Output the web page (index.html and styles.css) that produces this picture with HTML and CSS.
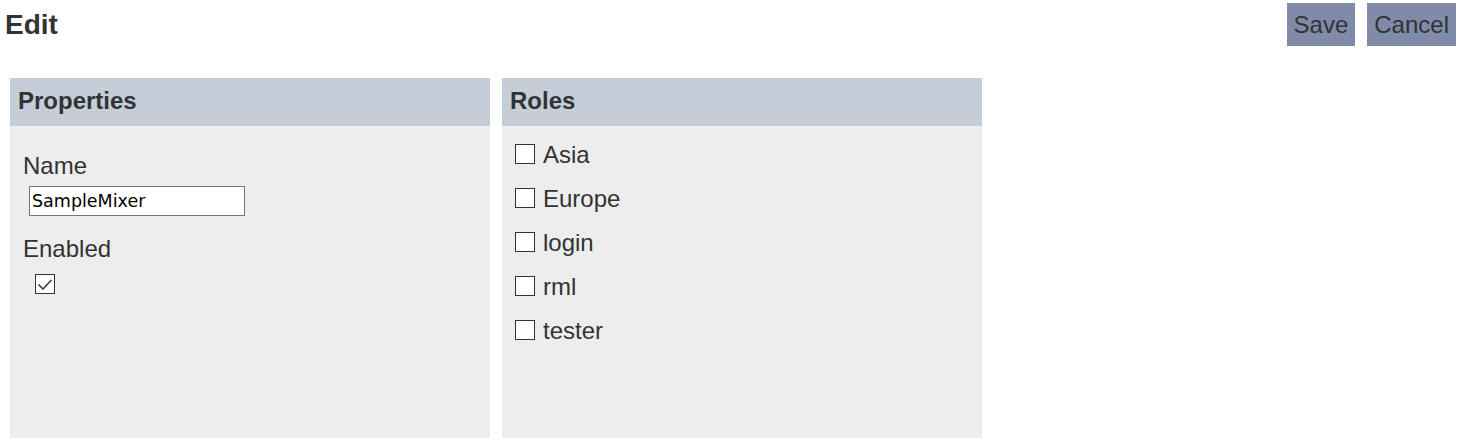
FILE: index.html
```html
<!DOCTYPE html>
<html lang="en">
<head>
    <meta charset="UTF-8" />
    <title>Edit</title>
    <link rel="stylesheet" href="styles.css">
</head>
<body>
    <header class="topbar">
        <h1>Edit</h1>
        <div class="actions">
            <button class="btn">Save</button>
            <button class="btn">Cancel</button>
        </div>
    </header>

    <main class="panels">
        <section class="panel">
            <h2 class="panel-title">Properties</h2>
            <div class="panel-body props">
                <div class="field">
                    <label class="field-label">Name</label>
                    <input class="text-input" type="text" value="SampleMixer" />
                </div>
                <div class="field">
                    <label class="field-label">Enabled</label>
                    <span class="check checked">
                        <svg viewBox="0 0 18 18" width="18" height="18"><path d="M2.5 9.5 L7 14 L15.5 5" fill="none" stroke="#333" stroke-width="1.5"/></svg>
                    </span>
                </div>
            </div>
        </section>

        <section class="panel">
            <h2 class="panel-title">Roles</h2>
            <div class="panel-body roles">
                <label class="role"><span class="check"></span>Asia</label>
                <label class="role"><span class="check"></span>Europe</label>
                <label class="role"><span class="check"></span>login</label>
                <label class="role"><span class="check"></span>rml</label>
                <label class="role"><span class="check"></span>tester</label>
            </div>
        </section>
    </main>
</body>
</html>
```

FILE: styles.css
```css
:root {
    --text: #333333;
    --head-bg: #c5cdd9;
    --panel-bg: #ededed;
    --btn-bg: #7f8ba8;
}
body {
    margin: 0;
    font-family: 'Liberation Sans', Arial, sans-serif;
    color: var(--text);
    background: #ffffff;
}
.topbar {
    display: flex;
    justify-content: space-between;
    align-items: flex-start;
    padding: 3px 6px 0 5px;
    height: 78px;
    box-sizing: border-box;
}
h1 {
    margin: 6px 0 0;
    font-size: 28px;
    line-height: 32px;
}
.actions {
    display: flex;
    gap: 12px;
}
.btn {
    height: 43px;
    padding: 0 7px;
    border: none;
    background: var(--btn-bg);
    color: var(--text);
    font-family: 'Liberation Sans', Arial, sans-serif;
    font-size: 24px;
    cursor: pointer;
}
.panels {
    display: flex;
    gap: 12px;
    padding-left: 10px;
}
.panel {
    width: 480px;
    height: 360px;
    background: var(--panel-bg);
}
.panel-title {
    margin: 0;
    height: 48px;
    line-height: 45px;
    padding-left: 8px;
    background: var(--head-bg);
    font-size: 24px;
}
.props {
    padding: 26px 13px;
}
.field {
    margin-bottom: 19px;
}
.field-label {
    display: block;
    font-size: 24px;
    line-height: 28px;
}
.text-input {
    display: block;
    margin: 6px 0 0 6px;
    width: 216px;
    height: 30px;
    box-sizing: border-box;
    padding: 0 2px;
    border: 1px solid #767676;
    font-family: 'DejaVu Sans', Tahoma, sans-serif;
    font-size: 17.5px;
    color: #000;
}
.check {
    display: inline-flex;
    align-items: center;
    justify-content: center;
    width: 20px;
    height: 20px;
    box-sizing: border-box;
    border: 1px solid #333;
    background: #fff;
    vertical-align: middle;
}
.field .check {
    margin: 11px 0 0 12px;
}
.roles {
    padding: 15px 13px 0;
    display: flex;
    flex-direction: column;
    gap: 16px;
}
.role {
    display: flex;
    align-items: center;
    gap: 8px;
    font-size: 24px;
    line-height: 28px;
}
.role .check {
    margin-top: -2px;
}
```
